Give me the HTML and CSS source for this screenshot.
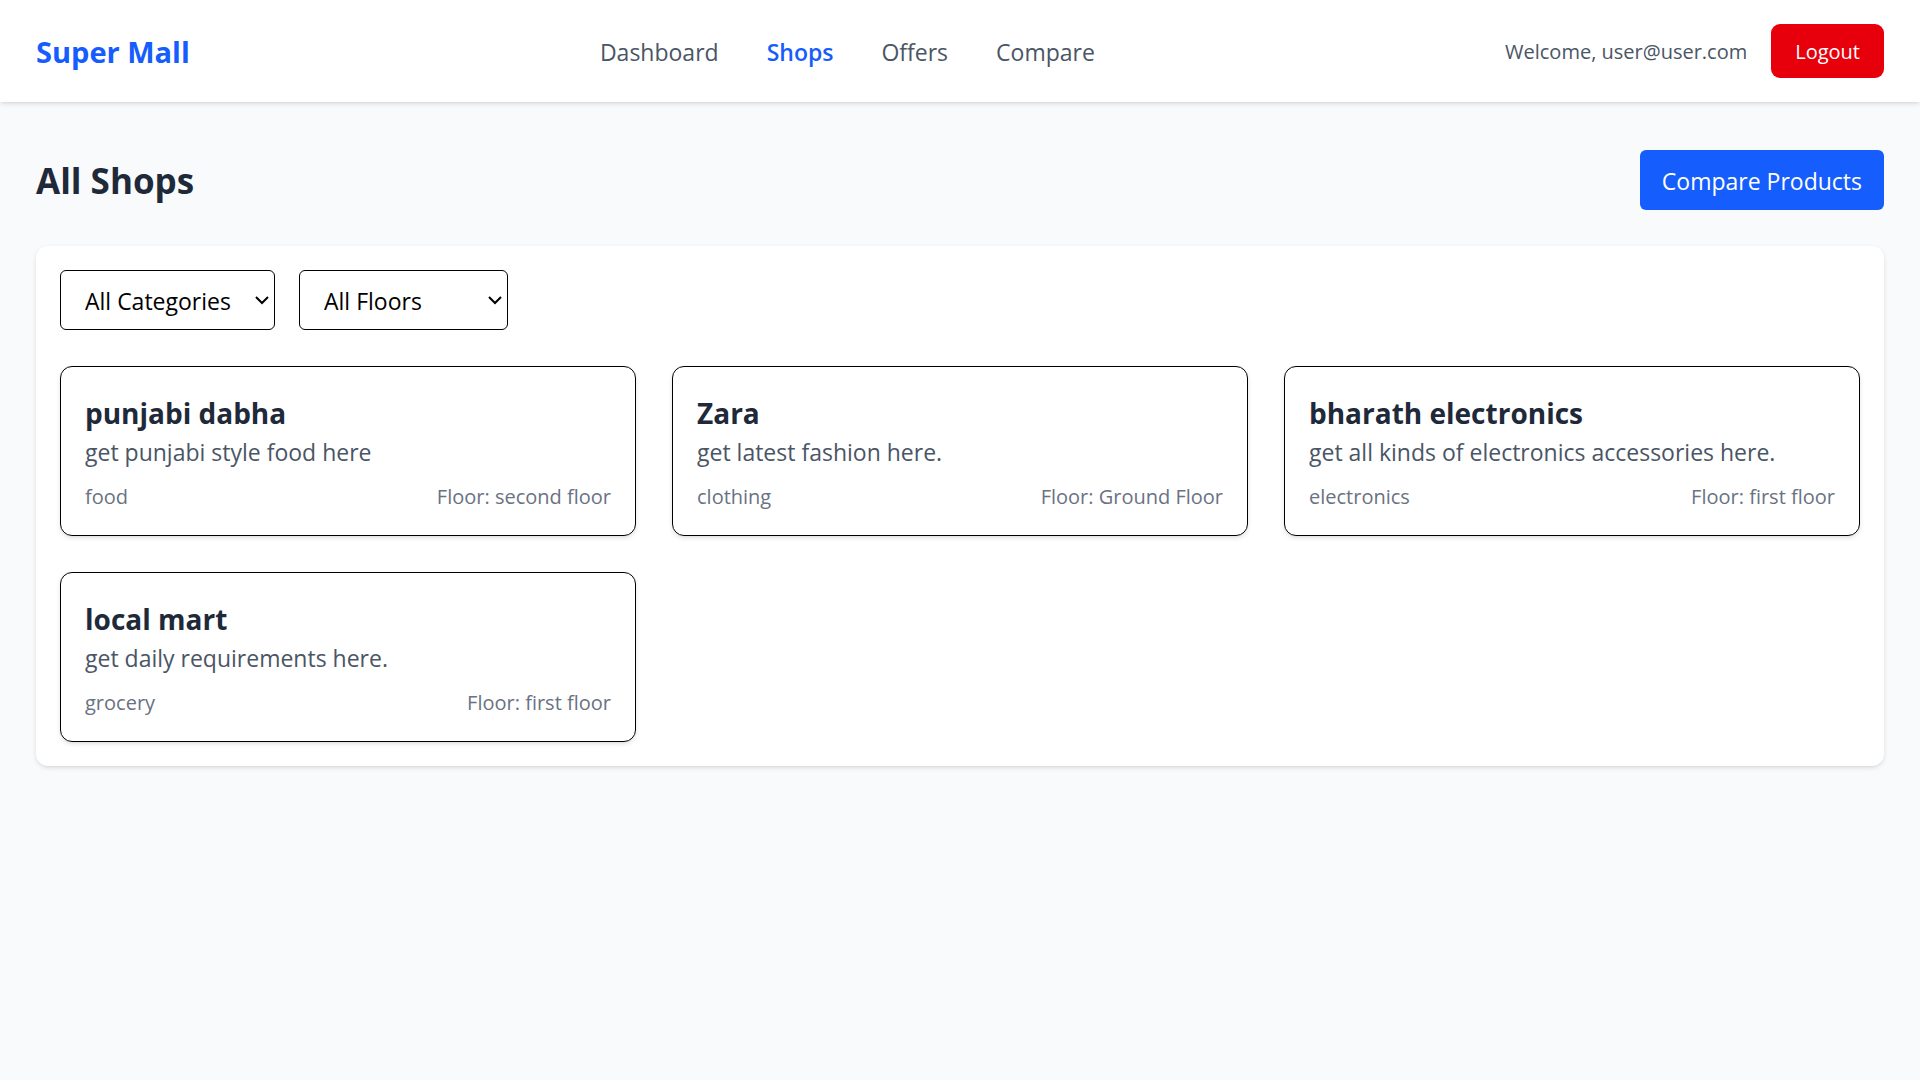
FILE: index.html
```html
<!DOCTYPE html>
<html lang="en">
<head>
<meta charset="utf-8">
<meta name="viewport" content="width=device-width, initial-scale=1">
<title>Super Mall</title>
<link rel="stylesheet" href="styles.css">
</head>
<body>
<header class="navbar">
  <a class="brand" href="#">Super Mall</a>
  <nav class="nav-links">
    <a href="#">Dashboard</a>
    <a class="active" href="#" aria-current="page">Shops</a>
    <a href="#">Offers</a>
    <a href="#">Compare</a>
  </nav>
  <div class="account">
    <span class="welcome">Welcome, user@user.com</span>
    <button class="logout" type="button">Logout</button>
  </div>
</header>
<main class="page">
  <div class="page-head">
    <h1>All Shops</h1>
    <button class="compare" type="button">Compare Products</button>
  </div>
  <section class="panel">
    <div class="filters">
      <div class="filter">
        <select class="category" aria-label="Category">
          <option>All Categories</option>
          <option>food</option>
          <option>clothing</option>
          <option>electronics</option>
          <option>grocery</option>
        </select>
        <svg class="chevron" viewBox="0 0 14 9" aria-hidden="true"><path d="M1 1l6 6 6-6"/></svg>
      </div>
      <div class="filter">
        <select class="floor" aria-label="Floor">
          <option>All Floors</option>
          <option>Ground Floor</option>
          <option>first floor</option>
          <option>second floor</option>
        </select>
        <svg class="chevron" viewBox="0 0 14 9" aria-hidden="true"><path d="M1 1l6 6 6-6"/></svg>
      </div>
    </div>
    <div class="shops">
      <article class="card">
        <h2>punjabi dabha</h2>
        <p class="desc">get punjabi style food here</p>
        <div class="meta"><span>food</span><span>Floor: second floor</span></div>
      </article>
      <article class="card">
        <h2>Zara</h2>
        <p class="desc">get latest fashion here.</p>
        <div class="meta"><span>clothing</span><span>Floor: Ground Floor</span></div>
      </article>
      <article class="card">
        <h2>bharath electronics</h2>
        <p class="desc">get all kinds of electronics accessories here.</p>
        <div class="meta"><span>electronics</span><span>Floor: first floor</span></div>
      </article>
      <article class="card">
        <h2>local mart</h2>
        <p class="desc">get daily requirements here.</p>
        <div class="meta"><span>grocery</span><span>Floor: first floor</span></div>
      </article>
    </div>
  </section>
</main>
</body>
</html>
```
FILE: styles.css
```css
* {
  box-sizing: border-box;
  margin: 0;
  padding: 0;
}

body {
  min-height: 100vh;
  background: #f9fafb;
  color: #000;
  font-family: "Open Sans", "Noto Sans", sans-serif;
  font-size: 23px;
  line-height: 36px;
}

a {
  color: inherit;
  text-decoration: none;
}

button,
select {
  font: inherit;
  cursor: pointer;
}

.navbar {
  display: flex;
  align-items: center;
  justify-content: space-between;
  padding: 24px 36px;
  background: #fff;
  box-shadow: 0 2px 5px rgba(0, 0, 0, 0.1), 0 2px 3px -2px rgba(0, 0, 0, 0.1);
}

.brand {
  padding-top: 2px;
  color: #155dfc;
  font-size: 29px;
  font-weight: 700;
  line-height: 42px;
}

.nav-links {
  display: flex;
  gap: 48px;
  padding-top: 2px;
  color: #4a5565;
}

.nav-links .active {
  color: #155dfc;
  font-weight: 600;
}

.account {
  display: flex;
  align-items: center;
  gap: 24px;
  font-size: 20px;
  line-height: 30px;
}

.welcome {
  padding-top: 2px;
  color: #4a5565;
}

.logout {
  padding: 13px 24px 11px;
  border: 0;
  border-radius: 9px;
  background: #e7000b;
  color: #fff;
}

.page {
  padding: 48px 36px;
}

.page-head {
  display: flex;
  align-items: center;
  justify-content: space-between;
  margin-bottom: 36px;
}

h1 {
  padding-top: 2px;
  color: #1e2939;
  font-size: 35px;
  font-weight: 700;
  line-height: 48px;
}

.compare {
  padding: 13px 22px 11px;
  border: 0;
  border-radius: 6px;
  background: #155dfc;
  color: #fff;
}

.panel {
  padding: 24px;
  border-radius: 12px;
  background: #fff;
  box-shadow: 0 2px 5px rgba(0, 0, 0, 0.1), 0 2px 3px -2px rgba(0, 0, 0, 0.1);
}

.filters {
  display: flex;
  gap: 24px;
  margin-bottom: 36px;
}

.filter {
  position: relative;
}

select {
  height: 60px;
  padding: 2px 24px 0;
  border: 1px solid #000;
  border-radius: 6px;
  background: #fff;
  color: #000;
  appearance: none;
}

.category {
  width: 215px;
}

.floor {
  width: 209px;
}

.chevron {
  position: absolute;
  top: 26px;
  right: 6px;
  width: 14px;
  height: 9px;
  fill: none;
  stroke: #000;
  stroke-width: 2;
  pointer-events: none;
}

.shops {
  display: grid;
  grid-template-columns: repeat(3, 1fr);
  gap: 36px;
}

.card {
  padding: 25px 24px 23px;
  border: 1px solid #000;
  border-radius: 12px;
  box-shadow: 0 2px 5px rgba(0, 0, 0, 0.1), 0 2px 3px -2px rgba(0, 0, 0, 0.1);
}

.card h2 {
  color: #1e2939;
  font-size: 28px;
  font-weight: 700;
  line-height: 42px;
}

.desc {
  color: #4a5565;
}

.meta {
  display: flex;
  justify-content: space-between;
  margin-top: 12px;
  color: #6a7282;
  font-size: 20px;
  line-height: 30px;
}
```
